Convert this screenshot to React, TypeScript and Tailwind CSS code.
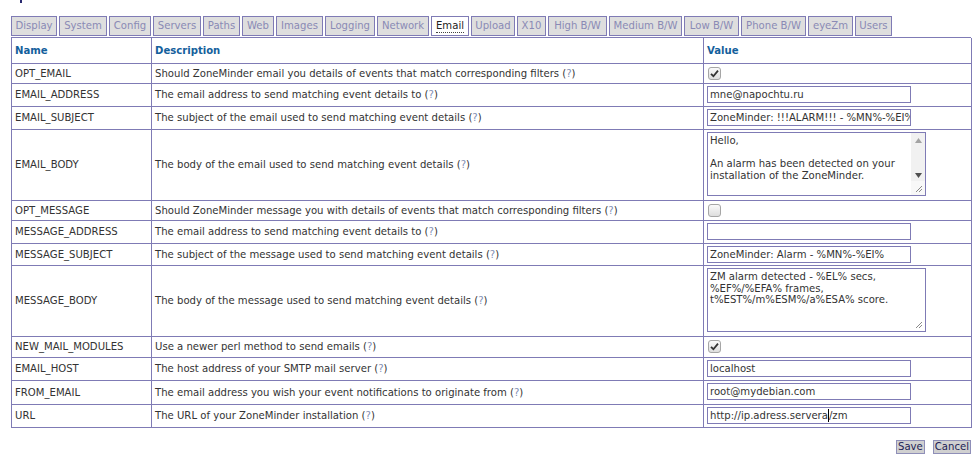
import React from "react";

const tabs: [string, number][] = [
  ["Display", 46],
  ["System", 48],
  ["Config", 42],
  ["Servers", 48],
  ["Paths", 37],
  ["Web", 32],
  ["Images", 47],
  ["Logging", 50],
  ["Network", 52],
  ["Email", 38],
  ["Upload", 44],
  ["X10", 29],
  ["High B/W", 59],
  ["Medium B/W", 73],
  ["Low B/W", 55],
  ["Phone B/W", 65],
  ["eyeZm", 45],
  ["Users", 37],
];

type Row = {
  name: string;
  desc: string;
  h: number;
  kind: "check" | "uncheck" | "input" | "area" | "areaScroll";
  value?: string;
  lines?: string[];
};

const rows: Row[] = [
  { name: "OPT_EMAIL", desc: "Should ZoneMinder email you details of events that match corresponding filters", h: 20, kind: "check" },
  { name: "EMAIL_ADDRESS", desc: "The email address to send matching event details to", h: 23, kind: "input", value: "mne@napochtu.ru" },
  { name: "EMAIL_SUBJECT", desc: "The subject of the email used to send matching event details", h: 23, kind: "input", value: "ZoneMinder: !!!ALARM!!! - %MN%-%EI%" },
  { name: "EMAIL_BODY", desc: "The body of the email used to send matching event details", h: 71, kind: "areaScroll", lines: ["Hello,", "", "An alarm has been detected on your", "installation of the ZoneMinder."] },
  { name: "OPT_MESSAGE", desc: "Should ZoneMinder message you with details of events that match corresponding filters", h: 20, kind: "uncheck" },
  { name: "MESSAGE_ADDRESS", desc: "The email address to send matching event details to", h: 23, kind: "input", value: "" },
  { name: "MESSAGE_SUBJECT", desc: "The subject of the message used to send matching event details", h: 22, kind: "input", value: "ZoneMinder: Alarm - %MN%-%EI%" },
  { name: "MESSAGE_BODY", desc: "The body of the message used to send matching event details", h: 71, kind: "area", lines: ["ZM alarm detected - %EL% secs,", "%EF%/%EFA% frames,", "t%EST%/m%ESM%/a%ESA% score."] },
  { name: "NEW_MAIL_MODULES", desc: "Use a newer perl method to send emails", h: 21, kind: "check" },
  { name: "EMAIL_HOST", desc: "The host address of your SMTP mail server", h: 23, kind: "input", value: "localhost" },
  { name: "FROM_EMAIL", desc: "The email address you wish your event notifications to originate from", h: 24, kind: "input", value: "root@mydebian.com" },
  { name: "URL", desc: "The URL of your ZoneMinder installation", h: 23, kind: "input", value: "http://ip.adress.servera/zm" },
];

function Checkbox({ checked }: { checked: boolean }) {
  return (
    <div className="w-[13px] h-[13px] rounded-[3px] border border-[#a6a6a6] bg-gradient-to-b from-[#fafafa] to-[#dedede] flex items-center justify-center">
      {checked && (
        <svg width="9" height="9" viewBox="0 0 9 9">
          <path d="M1 4.8 L3.4 7.2 L8 1.6" fill="none" stroke="#333" strokeWidth="1.8" />
        </svg>
      )}
    </div>
  );
}

function Grip() {
  return (
    <svg width="8" height="8" viewBox="0 0 8 8" className="absolute right-[2px] bottom-[2px]">
      <path d="M7 1 L1 7 M7 4 L4 7" stroke="#8a8a8a" strokeWidth="1" />
    </svg>
  );
}

function TextArea({ lines, scroll }: { lines: string[]; scroll: boolean }) {
  return (
    <div className="relative flex w-[219px] h-[64px] border border-[#7f7bb5] bg-white overflow-hidden">
      <div className="flex-1 pl-[2px] pt-[2px] leading-[11.6px] text-[#333] whitespace-pre overflow-hidden">
        {lines.map((l, i) => (
          <div key={i} className="h-[11.6px]">{l}</div>
        ))}
      </div>
      {scroll ? (
        <div className="w-[14px] flex flex-col bg-[#f1f1f1]">
          <div className="flex-1 flex flex-col items-center justify-between pt-[5px] pb-[3px]">
            <svg width="7" height="5" viewBox="0 0 7 5"><path d="M0 5 L3.5 0 L7 5Z" fill="#a3a3a3" /></svg>
            <svg width="7" height="5" viewBox="0 0 7 5"><path d="M0 0 L3.5 5 L7 0Z" fill="#505050" /></svg>
          </div>
          <div className="relative h-[14px] bg-[#f8f8f8]">
            <Grip />
          </div>
        </div>
      ) : (
        <Grip />
      )}
    </div>
  );
}

export default function App() {
  const font = { fontFamily: '"DejaVu Sans", Verdana, sans-serif' };
  return (
    <div className="bg-white w-[980px] h-[461px] overflow-hidden text-[10.1px] text-[#333]" style={font}>
      <div className="h-[4px] pl-[20px]">
        <div className="w-[2px] h-[3px] bg-[#2a2a70]" />
      </div>
      <div className="flex pl-[11px] mt-[12px] gap-[2px] h-[20px]">
        {tabs.map(([t, w]) => {
          const active = t === "Email";
          return (
            <div
              key={t}
              style={{ width: w }}
              className={`h-[20px] border border-[#7f7bb5] flex items-center justify-center whitespace-nowrap ${
                active ? "bg-white text-[#222]" : "bg-[#dedede] text-[#8a8ab5]"
              }`}
            >
              <span className={active ? "border-b border-dotted border-[#444] leading-[12px]" : ""}>{t}</span>
            </div>
          );
        })}
      </div>
      <div className="ml-[11px] mt-[1px] w-[960px] grid grid-cols-[140px_552px_268px] border-t border-l border-[#7f7bb5]">
        <div className="h-[26px] border-r border-b border-[#7f7bb5] flex items-center pl-[3px] font-bold text-[#14609c]">Name</div>
        <div className="h-[26px] border-r border-b border-[#7f7bb5] flex items-center pl-[3px] font-bold text-[#14609c]">Description</div>
        <div className="h-[26px] border-r border-b border-[#7f7bb5] flex items-center pl-[3px] font-bold text-[#14609c]">Value</div>
        {rows.map((r) => (
          <React.Fragment key={r.name}>
            <div style={{ height: r.h }} className="border-r border-b border-[#7f7bb5] flex items-center pl-[3px] whitespace-nowrap">
              {r.name}
            </div>
            <div style={{ height: r.h }} className="border-r border-b border-[#7f7bb5] flex items-center pl-[3px] whitespace-nowrap">
              <span>
                {r.desc} (<span className="text-[#7f8fb5]">?</span>)
              </span>
            </div>
            <div style={{ height: r.h }} className="border-r border-b border-[#7f7bb5] pl-[3px] pt-[2px]">
              {r.kind === "check" && <div className="pt-[1px] pl-[1px]"><Checkbox checked /></div>}
              {r.kind === "uncheck" && <div className="pt-[1px] pl-[1px]"><Checkbox checked={false} /></div>}
              {r.kind === "input" && (
                <div className="w-[204px] h-[17px] border border-[#7f7bb5] pl-[2px] flex items-center overflow-hidden whitespace-nowrap text-[#333]">
                  {r.name === "URL" ? (
                    <>
                      http://ip.adress.servera<span className="inline-block w-[1px] h-[13px] bg-black align-middle" />/zm
                    </>
                  ) : (
                    r.value
                  )}
                </div>
              )}
              {r.kind === "areaScroll" && <TextArea lines={r.lines!} scroll />}
              {r.kind === "area" && <TextArea lines={r.lines!} scroll={false} />}
            </div>
          </React.Fragment>
        ))}
      </div>
      <div className="flex justify-end w-[971px] mt-[12px] gap-[8px]">
        <div className="h-[14px] px-[1px] border border-[#8f8fb8] bg-[#d0d0d0] text-[#1d1d55] flex items-center leading-none">Save</div>
        <div className="h-[14px] px-[1px] border border-[#8f8fb8] bg-[#d0d0d0] text-[#1d1d55] flex items-center leading-none">Cancel</div>
      </div>
    </div>
  );
}
